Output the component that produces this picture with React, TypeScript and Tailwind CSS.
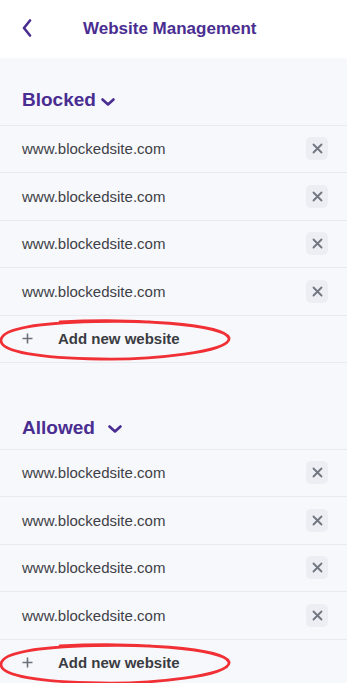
import React from "react";

const PURPLE = "#4a2d91";

function Chevron() {
  return (
    <svg width="14" height="8" viewBox="0 0 14 8" fill="none">
      <path d="M1.5 1.5 L7 6.5 L12.5 1.5" stroke={PURPLE} strokeWidth="2.6" strokeLinecap="round" strokeLinejoin="round" />
    </svg>
  );
}

function Row() {
  return (
    <div className="h-[47.5px] border-b border-[#e9eaf0] flex items-center justify-between pl-[22px] pr-[19px]">
      <span className="text-[15px] text-[#404146] mt-[1px]">www.blockedsite.com</span>
      <div className="w-[22px] h-[23px] rounded-[5px] bg-[#eceef4] flex items-center justify-center">
        <svg width="11" height="11" viewBox="0 0 11 11" fill="none">
          <path d="M1.5 1.5 L9.5 9.5 M9.5 1.5 L1.5 9.5" stroke="#70757e" strokeWidth="1.8" strokeLinecap="round" />
        </svg>
      </div>
    </div>
  );
}

function AddRow() {
  return (
    <div className="relative h-[47.5px] border-b border-[#e9eaf0] flex items-center pl-[22px]">
      <svg width="11" height="11" viewBox="0 0 11 11" fill="none">
        <path d="M5.5 0.5 V10.5 M0.5 5.5 H10.5" stroke="#6b7079" strokeWidth="1.6" />
      </svg>
      <span className="ml-[25px] text-[15px] font-bold text-[#3a3c42]">Add new website</span>
      <svg className="absolute left-0 top-0 pointer-events-none" width="240" height="48" viewBox="0 0 240 48" fill="none">
        <path
          d="M60 6 C 130 2, 225 8, 229 22 C 232 36, 150 44, 100 43 C 40 42, 0 36, 1 24 C 2 12, 40 7, 95 5.5 C 120 5, 140 5.5, 150 6"
          stroke="#f03035"
          strokeWidth="2.8"
          strokeLinecap="round"
          fill="none"
        />
      </svg>
    </div>
  );
}

export default function App() {
  return (
    <div className="w-[347px] h-[683px] overflow-hidden bg-[#f7f8fc]" style={{ fontFamily: '"Liberation Sans", Arial, sans-serif' }}>
      <div className="h-[58px] bg-white flex items-center pl-[22px]">
        <svg width="10" height="18" viewBox="0 0 10 18" fill="none" className="mt-[-2px]">
          <path d="M8 1.5 L2 9 L8 16.5" stroke={PURPLE} strokeWidth="2.6" strokeLinecap="round" strokeLinejoin="round" />
        </svg>
        <span className="ml-[51px] text-[17px] font-bold text-[#4a2d91] mt-[-1px]">Website Management</span>
      </div>

      <div className="h-[67.5px] border-b border-[#e9eaf0] flex items-end pl-[22px] pb-[14px]">
        <span className="text-[19px] leading-[22px] font-bold text-[#4a2d91]">Blocked</span>
        <span className="ml-[5px] mb-[5px]"><Chevron /></span>
      </div>
      <Row />
      <Row />
      <Row />
      <Row />
      <AddRow />

      <div className="h-[86.5px] border-b border-[#e9eaf0] flex items-end pl-[22px] pb-[10px]">
        <span className="text-[19px] leading-[22px] font-bold text-[#4a2d91]">Allowed</span>
        <span className="ml-[13px] mb-[6px]"><Chevron /></span>
      </div>
      <Row />
      <Row />
      <Row />
      <Row />
      <AddRow />
    </div>
  );
}
